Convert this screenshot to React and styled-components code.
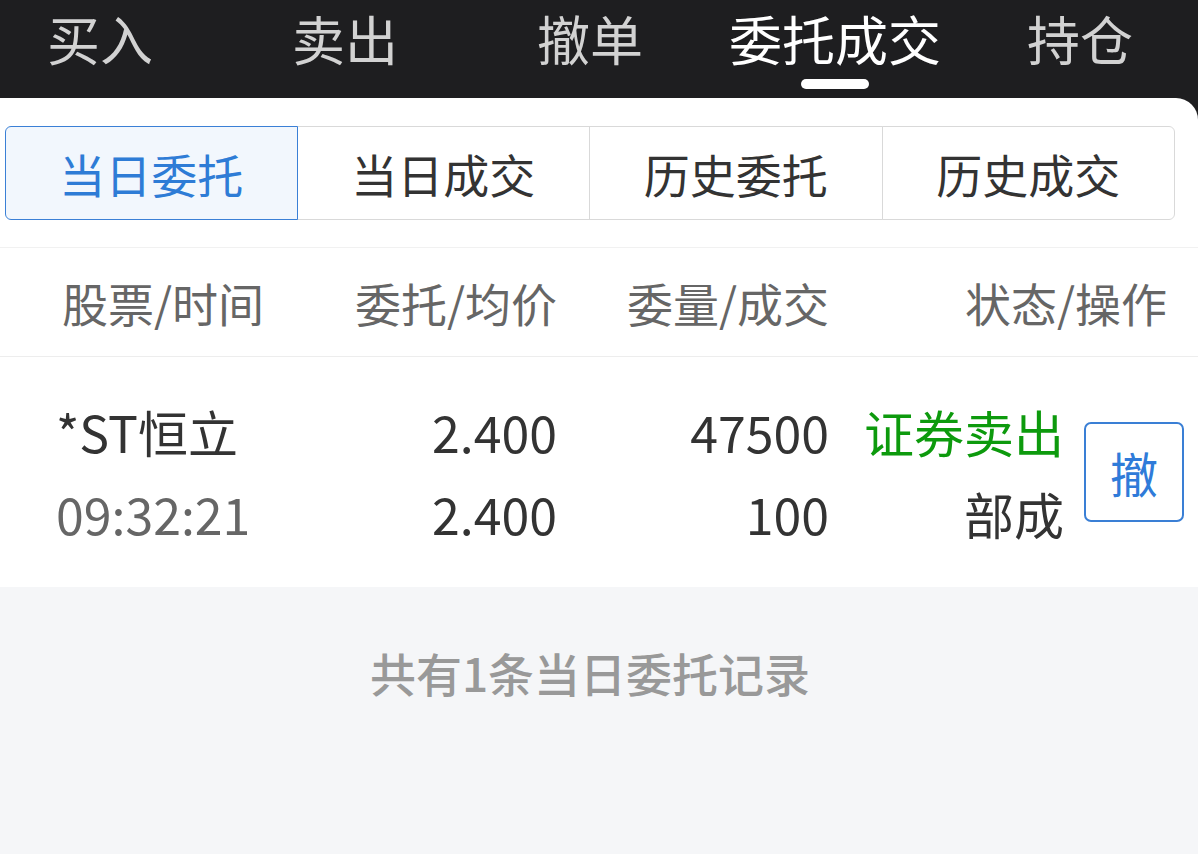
import React from "react";
import styled, { createGlobalStyle } from "styled-components";

const GlobalStyle = createGlobalStyle`
  html, body {
    margin: 0;
    padding: 0;
    background: #1e1e20;
  }
  body {
    font-family: "Noto Sans CJK SC", "Noto Sans", sans-serif;
  }
`;

const topTabs = ["买入", "卖出", "撤单", "委托成交", "持仓"];
const segments = ["当日委托", "当日成交", "历史委托", "历史成交"];

const App = () => {
  return (
    <Screen>
      <GlobalStyle />
      <TopBar>
        {topTabs.map((t) => (
          <TopTab key={t} $active={t === "委托成交"}>
            <span>{t}</span>
            <Indicator $active={t === "委托成交"} />
          </TopTab>
        ))}
      </TopBar>
      <Panel>
        <SegmentWrap>
          <Segments>
            {segments.map((s, i) => (
              <Segment key={s} $active={i === 0}>
                {s}
              </Segment>
            ))}
          </Segments>
        </SegmentWrap>
        <HeaderRow>
          <HeadCell className="first">股票/时间</HeadCell>
          <HeadCell>委托/均价</HeadCell>
          <HeadCell>委量/成交</HeadCell>
          <HeadCell className="last">状态/操作</HeadCell>
        </HeaderRow>
        <DataRow>
          <Cell className="first">
            <Line>*ST恒立</Line>
            <Line $muted>09:32:21</Line>
          </Cell>
          <Cell>
            <Line>2.400</Line>
            <Line>2.400</Line>
          </Cell>
          <Cell>
            <Line>47500</Line>
            <Line>100</Line>
          </Cell>
          <StatusCell>
            <div>
              <Line $green>证券卖出</Line>
              <Line>部成</Line>
            </div>
            <CancelButton>撤</CancelButton>
          </StatusCell>
        </DataRow>
        <Footer>共有1条当日委托记录</Footer>
      </Panel>
    </Screen>
  );
};
export default App;

const Screen = styled.div`
  min-height: 100vh;
  display: flex;
  flex-direction: column;
  background: #1e1e20;
`;
const TopBar = styled.div`
  display: grid;
  grid-template-columns: repeat(5, 200px);
  column-gap: 45px;
  height: 98px;
`;
const TopTab = styled.div`
  display: flex;
  flex-direction: column;
  align-items: center;
  span {
    font-size: 53px;
    line-height: 77px;
    white-space: nowrap;
    color: ${(p) => (p.$active ? "#ffffff" : "#d2d2d2")};
  }
`;
const Indicator = styled.div`
  margin-top: 2px;
  width: 68px;
  height: 10px;
  border-radius: 5px;
  background: ${(p) => (p.$active ? "#ffffff" : "transparent")};
`;
const Panel = styled.div`
  flex: 1;
  display: flex;
  flex-direction: column;
  background: #ffffff;
  border-top-right-radius: 22px;
  overflow: hidden;
`;
const SegmentWrap = styled.div`
  padding: 28px 23px 27px 5px;
  border-bottom: 1px solid #f1f1f1;
`;
const Segments = styled.div`
  display: grid;
  grid-template-columns: repeat(4, 1fr);
  height: 94px;
`;
const Segment = styled.div`
  display: flex;
  align-items: center;
  justify-content: center;
  font-size: 46px;
  color: ${(p) => (p.$active ? "#2e7cd6" : "#333333")};
  background: ${(p) => (p.$active ? "#f2f7fd" : "#ffffff")};
  border: 1px solid ${(p) => (p.$active ? "#3b80d6" : "#d9d9d9")};
  margin-left: ${(p) => (p.$active ? "0" : "-1px")};
  position: relative;
  z-index: ${(p) => (p.$active ? 1 : 0)};
  &:first-child {
    border-radius: 6px 0 0 6px;
  }
  &:last-child {
    border-radius: 0 6px 6px 0;
  }
`;
const HeaderRow = styled.div`
  display: grid;
  grid-template-columns: 300px 257px 272px 1fr;
  height: 108px;
  align-items: center;
  border-bottom: 1px solid #ededed;
`;
const HeadCell = styled.div`
  font-size: 46px;
  color: #666666;
  text-align: right;
  &.first {
    text-align: left;
    padding-left: 62px;
  }
  &.last {
    padding-right: 31px;
  }
`;
const DataRow = styled.div`
  display: grid;
  grid-template-columns: 300px 257px 272px 1fr;
  height: 230px;
  align-items: center;
`;
const Cell = styled.div`
  text-align: right;
  &.first {
    text-align: left;
    padding-left: 56px;
  }
`;
const Line = styled.div`
  font-size: 50px;
  line-height: 82px;
  color: ${(p) => (p.$green ? "#0d9a0d" : p.$muted ? "#666666" : "#333333")};
`;
const StatusCell = styled.div`
  display: flex;
  align-items: center;
  justify-content: flex-end;
  gap: 20px;
  padding-right: 14px;
  text-align: right;
`;
const CancelButton = styled.div`
  box-sizing: border-box;
  width: 100px;
  height: 100px;
  border: 2px solid #3a7fd5;
  border-radius: 7px;
  display: flex;
  align-items: center;
  justify-content: center;
  font-size: 48px;
  color: #2f7bd9;
`;
const Footer = styled.div`
  flex: 1;
  background: #f5f6f8;
  padding: 62px 18px 0 0;
  text-align: center;
  font-size: 46px;
  line-height: 46px;
  font-weight: 500;
  color: #999999;
`;
